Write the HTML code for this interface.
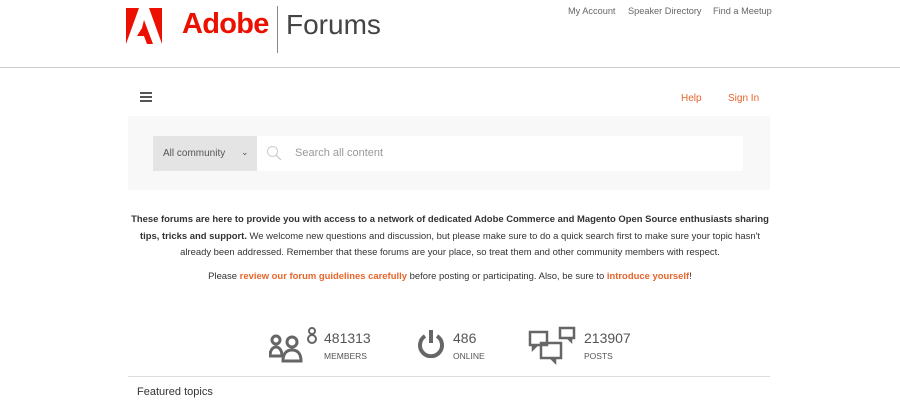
<!DOCTYPE html>
<html><head><style>
*{margin:0;padding:0;box-sizing:border-box}
body{width:900px;height:402px;overflow:hidden;background:#fff;font-family:"Liberation Sans",Arial,sans-serif;position:relative;color:#333}
.a{position:absolute}
.top a{color:#666;font-size:9.2px;text-decoration:none;position:absolute;top:6px}
.p{position:absolute;left:0;width:900px;text-align:center;font-size:9.45px;color:#333}
.num{font-size:14px;color:#555}
.lab{font-size:8.5px;color:#555}
</style></head><body>
<svg class="a" style="left:126px;top:8px" width="36" height="36" viewBox="0 0 36 36">
<polygon points="0,0 13,0 0,36" fill="#eb1000"/><polygon points="23,0 36,0 36,36" fill="#eb1000"/>
<polygon points="18,12 27,36 21,36 18,28 11,28 16,20" fill="#eb1000"/></svg>
<div class="a" style="left:182px;top:8px;font-size:29px;font-weight:bold;color:#eb1000;letter-spacing:-0.7px">Adobe</div>
<div class="a" style="left:277px;top:6px;width:1px;height:47px;background:#888"></div>
<div class="a" style="left:286px;top:9px;font-size:28px;color:#444">Forums</div>
<div class="top"><a style="left:568px">My Account</a><a style="left:628px">Speaker Directory</a><a style="left:713px">Find a Meetup</a></div>
<div class="a" style="left:0;top:67px;width:900px;height:1px;background:#ccc"></div>
<div class="a" style="left:140px;top:92px;width:12px;height:2px;background:#555;box-shadow:0 4px 0 #555,0 8px 0 #555"></div>
<div class="a" style="left:681px;top:93px;font-size:10px;color:#e8652c">Help</div>
<div class="a" style="left:728px;top:93px;font-size:10px;color:#e8652c">Sign In</div>
<div class="a" style="left:128px;top:116px;width:642px;height:74px;background:#f8f8f8"></div>
<div class="a" style="left:153px;top:136px;width:104px;height:35px;background:#e4e4e4;font-size:10px;color:#555;padding:12px 0 0 10px">All community<span style="position:absolute;left:88px;top:11px;font-size:9px">⌄</span></div>
<div class="a" style="left:257px;top:136px;width:486px;height:35px;background:#fff"></div>
<svg class="a" style="left:266px;top:145px" width="16" height="16"><circle cx="6.5" cy="6.5" r="5" fill="none" stroke="#ccc" stroke-width="1"/><line x1="10" y1="10" x2="15" y2="15" stroke="#ccc" stroke-width="1.3"/></svg>
<div class="a" style="left:295px;top:147px;font-size:11px;color:#999">Search all content</div>
<div class="p" style="top:214px"><b>These forums are here to provide you with access to a network of dedicated Adobe Commerce and Magento Open Source enthusiasts sharing</b></div>
<div class="p" style="top:231px"><b>tips, tricks and support.</b> We welcome new questions and discussion, but please make sure to do a quick search first to make sure your topic hasn't</div>
<div class="p" style="top:247px">already been addressed. Remember that these forums are your place, so treat them and other community members with respect.</div>
<div class="p" style="top:271px">Please <b style="color:#e8652c">review our forum guidelines carefully</b> before posting or participating. Also, be sure to <b style="color:#e8652c">introduce yourself</b>!</div>
<svg class="a" style="left:269px;top:326px" width="48" height="38" fill="none" stroke="#666" stroke-width="3">
<circle cx="7" cy="14" r="4"/><path d="M1 30c0-6 3-9 6-9s6 3 6 9z"/>
<circle cx="23" cy="16" r="5"/><path d="M14 35c0-8 4-11 9-11s9 3 9 11z"/>
<circle cx="43" cy="5" r="3" stroke-width="2"/><circle cx="43" cy="13" r="4" stroke-width="2"/></svg>
<div class="a num" style="left:324px;top:330px">481313</div><div class="a lab" style="left:324px;top:351px">MEMBERS</div>
<svg class="a" style="left:417px;top:328px" width="28" height="30" fill="none" stroke="#666" stroke-width="4"><path d="M8 8a11 11 0 1 0 12 0"/><line x1="14" y1="2" x2="14" y2="15"/></svg>
<div class="a num" style="left:453px;top:330px">486</div><div class="a lab" style="left:453px;top:351px">ONLINE</div>
<svg class="a" style="left:528px;top:326px" width="50" height="40" fill="none" stroke="#666" stroke-width="2.5">
<rect x="2" y="6" width="17" height="13"/><path d="M5 19v4l4-4"/>
<rect x="32" y="2" width="14" height="10"/><path d="M43 12v3l-3-3"/>
<rect x="13" y="17" width="20" height="15"/><path d="M27 32v4l-4-4"/></svg>
<div class="a num" style="left:584px;top:330px">213907</div><div class="a lab" style="left:584px;top:351px">POSTS</div>
<div class="a" style="left:128px;top:376px;width:642px;height:1px;background:#ddd"></div>
<div class="a" style="left:137px;top:386px;font-size:11px;color:#333">Featured topics</div>
</body></html>
